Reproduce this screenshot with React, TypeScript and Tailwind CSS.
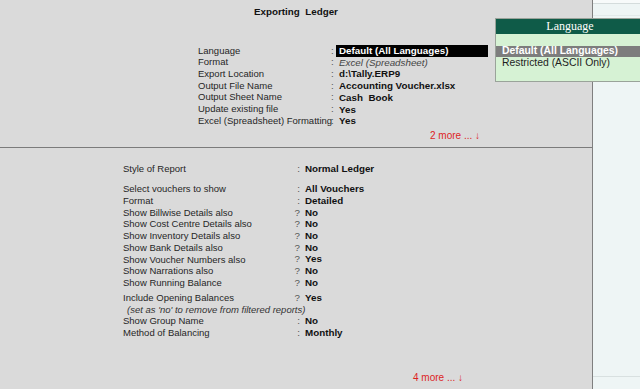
import clsx from 'clsx'

interface Row {
  label: string
  mark?: string
  value?: string
  italic?: boolean
  note?: boolean
  gapBefore?: boolean
}

const exportRows: Row[] = [
  { label: 'Language', value: 'Default (All Languages)' },
  { label: 'Format', value: 'Excel (Spreadsheet)', italic: true },
  { label: 'Export Location', value: 'd:\\Tally.ERP9' },
  { label: 'Output File Name', value: 'Accounting Voucher.xlsx' },
  { label: 'Output Sheet Name', value: 'Cash  Book' },
  { label: 'Update existing file', value: 'Yes' },
  { label: 'Excel (Spreadsheet) Formatting', value: 'Yes' },
]

const reportRows: Row[] = [
  { label: 'Style of Report', mark: ':', value: 'Normal Ledger' },
  { label: 'Select vouchers to show', mark: ':', value: 'All Vouchers', gapBefore: true },
  { label: 'Format', mark: ':', value: 'Detailed' },
  { label: 'Show Billwise Details also', mark: '?', value: 'No' },
  { label: 'Show Cost Centre Details also', mark: '?', value: 'No' },
  { label: 'Show Inventory Details also', mark: '?', value: 'No' },
  { label: 'Show Bank Details also', mark: '?', value: 'No' },
  { label: 'Show Voucher Numbers also', mark: '?', value: 'Yes' },
  { label: 'Show Narrations also', mark: '?', value: 'No' },
  { label: 'Show Running Balance', mark: '?', value: 'No' },
  { label: 'Include Opening Balances', mark: '?', value: 'Yes', gapBefore: true },
  { label: "(set as 'no' to remove from filtered reports)", note: true },
  { label: 'Show Group Name', mark: ':', value: 'No' },
  { label: 'Method of Balancing', mark: ':', value: 'Monthly' },
]

function MoreLink({ count, className }: { count: number; className: string }) {
  return (
    <div className={clsx('leading-[12px] text-[10px] text-[#dd1f1f] whitespace-pre', className)}>
      {count} more ... ↓
    </div>
  )
}

export default function App() {
  return (
    <div className="relative flex w-[640px] h-[389px] overflow-hidden bg-[#dadada] font-['Liberation_Sans',Arial,sans-serif] text-[9.8px] text-[#262626]">
      <div className="w-[592px] flex flex-col">
        {/* export settings */}
        <section className="h-[147px] flex flex-col">
          <div className="pt-[6px] text-center font-bold leading-[12px] text-[#111] whitespace-pre">
            Exporting  Ledger
          </div>
          <div className="mt-[27px] pl-[198px] flex flex-col">
            {exportRows.map((r, i) => (
              <div key={r.label} className="flex h-[11.7px] items-center whitespace-pre">
                <span className="w-[133px] text-[9.5px]">{r.label}</span>
                <span className="w-[5px] text-[#555]">:</span>
                <span
                  className={clsx(
                    'pl-[3px] h-[11.5px] leading-[11.5px]',
                    i === 0 ? 'w-[152px] bg-black text-white font-bold' : 'w-[200px]',
                    r.italic ? 'italic text-[#444]' : i !== 0 && 'font-bold text-[#111]',
                  )}
                >
                  {r.value}
                </span>
              </div>
            ))}
          </div>
          <MoreLink count={2} className="mt-[3px] pl-[430px]" />
        </section>

        <div className="h-px bg-[#7b7b7b]" />

        {/* report settings */}
        <section className="flex-1 flex flex-col pt-[15px] pl-[123px]">
          {reportRows.map((r) =>
            r.note ? (
              <div key={r.label} className="h-[11.7px] leading-[11.7px] pl-[4px] text-[9.5px] italic text-[#333] whitespace-pre">
                {r.label}
              </div>
            ) : (
              <div
                key={r.label}
                className={clsx('flex h-[11.7px] items-center whitespace-pre', r.gapBefore && 'mt-[3.5px]', r.label === 'Select vouchers to show' && 'mt-[9px]')}
              >
                <span className="w-[170px] text-[9.5px]">{r.label}</span>
                <span className="w-[10px] text-right pr-[3px] text-[#555]">{r.mark}</span>
                <span className="pl-[2px] font-bold text-[#111]">{r.value}</span>
              </div>
            ),
          )}
          <MoreLink count={4} className="mt-[33px] pl-[290px]" />
        </section>
      </div>

      <div className="w-px bg-[#7f7f7f]" />

      {/* right button bar */}
      <div className="flex-1 flex flex-col bg-[#eef5f5]">
        <div className="h-[4px] border-b border-[#d4dcdc] bg-[#f7fafa]" />
        <div className="h-[12px] border-b border-[#e2eaea]" />
        <div className="flex-1" />
        <div className="h-[13px] border-t border-[#d8e0e0]" />
      </div>

      {/* language popup */}
      <div className="absolute left-[495px] top-[18px] w-[150px] border border-[#9aa39a] bg-[#d6f2d4]">
        <div className="h-[15px] bg-[#0f5b48] text-white text-center font-['Liberation_Serif','Times_New_Roman',serif] text-[12px] leading-[15px]">
          Language
        </div>
        <div className="h-[47px] pt-[12px] text-[10.4px]">
          <div className="h-[10.5px] leading-[10.5px] bg-[#7d7d7d] text-white font-bold pl-[6px] whitespace-pre">
            Default (All Languages)
          </div>
          <div className="mt-[1px] h-[10.5px] leading-[10.5px] text-[#1e1e1e] pl-[6px] whitespace-pre">
            Restricted (ASCII Only)
          </div>
        </div>
      </div>
    </div>
  )
}
